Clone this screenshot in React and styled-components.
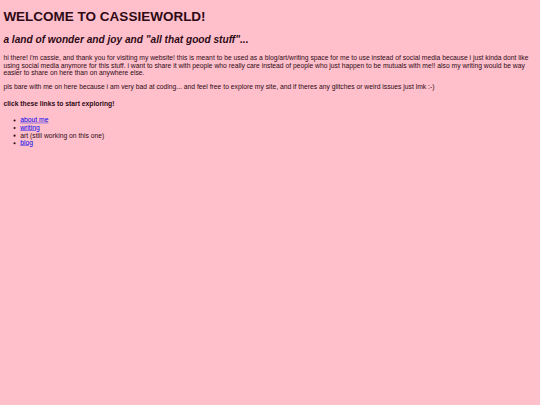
import React from "react";
import styled, { createGlobalStyle } from "styled-components";

// page was laid out at 1280px wide, photographed down to 540px
const DESIGN_WIDTH = 1280;
const S = 540 / DESIGN_WIDTH;

const ink = "#2e0a16";

const GlobalStyle = createGlobalStyle`
  html, body {
    background-color: pink;
    margin: 0;
    overflow: hidden;
  }
`;

const Page = styled.main`
  display: flow-root;
  width: ${DESIGN_WIDTH}px;
  box-sizing: border-box;
  padding: 0 8px;
  transform: scale(${S});
  transform-origin: top left;
  color: ${ink};
  font-family: "Liberation Sans", Arial, sans-serif;
  font-size: 16px;
`;

const Title = styled.h1`
  font-size: 32px;
  font-weight: bold;
  margin: 21.44px 0;
`;

const Tagline = styled.h2`
  font-size: 24px;
  font-weight: bold;
  font-style: italic;
  margin: 19.92px 0;
`;

const Para = styled.p`
  margin: 16px 0;
`;

const Prompt = styled.h4`
  font-size: 16px;
  font-weight: bold;
  margin: 21.28px 0;
`;

const LinkList = styled.ul`
  margin: 16px 0;
  padding-left: 40px;
  list-style: disc;
`;

const Item = styled.li``;

const PageLink = styled.a`
  color: #0000ee;
  text-decoration: underline;
`;

export default function App() {
  return (
    <>
      <GlobalStyle />
      <Page>
        <Title>WELCOME TO CASSIEWORLD!</Title>
        <Tagline>a land of wonder and joy and "all that good stuff"...</Tagline>
        <Para>
          hi there! i'm cassie, and thank you for visiting my website! this is meant to be used as a
          blog/art/writing space for me to use instead of social media because i just kinda dont like
          using social media anymore for this stuff. i want to share it with people who really care
          instead of people who just happen to be mutuals with me!! also my writing would be way easier
          to share on here than on anywhere else.
        </Para>
        <Para>
          pls bare with me on here because i am very bad at coding... and feel free to explore my site,
          and if theres any glitches or weird issues just lmk :-)
        </Para>
        <Prompt>click these links to start exploring!</Prompt>
        <LinkList>
          <Item><PageLink href="#about">about me</PageLink></Item>
          <Item><PageLink href="#writing">writing</PageLink></Item>
          <Item>art (still working on this one)</Item>
          <Item><PageLink href="#blog">blog</PageLink></Item>
        </LinkList>
      </Page>
    </>
  );
}
